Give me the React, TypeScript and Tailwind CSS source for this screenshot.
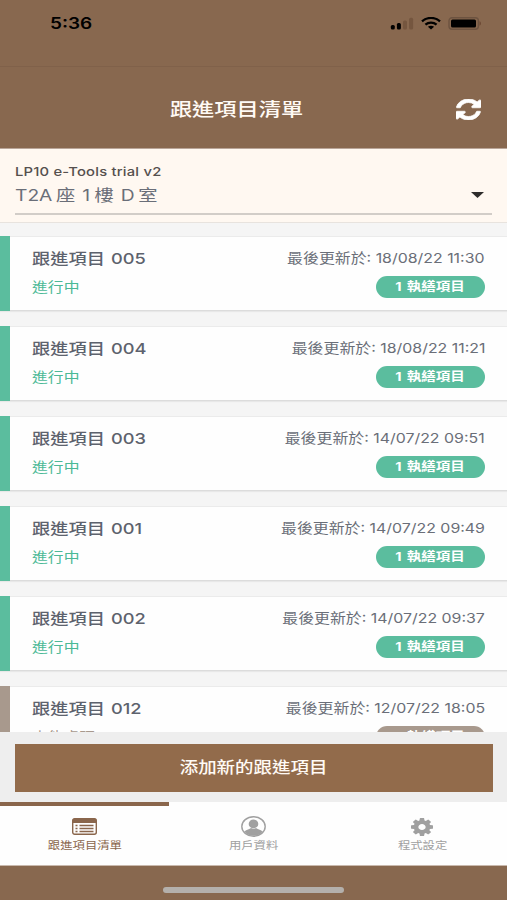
import type { ReactNode } from "react";

const FONT = "font-['Inter','Noto_Sans_CJK_TC',sans-serif]";

type Item = { id: string; updated: string; status: string; done?: boolean };

const ITEMS: Item[] = [
  { id: "005", updated: "18/08/22 11:30", status: "進行中" },
  { id: "004", updated: "18/08/22 11:21", status: "進行中" },
  { id: "003", updated: "14/07/22 09:51", status: "進行中" },
  { id: "001", updated: "14/07/22 09:49", status: "進行中" },
  { id: "002", updated: "14/07/22 09:37", status: "進行中" },
  { id: "012", updated: "12/07/22 18:05", status: "未能處理", done: true },
];

function Wide({ className = "", children }: { className?: string; children: ReactNode }) {
  return <span className={`block scale-x-120 whitespace-nowrap ${className}`}>{children}</span>;
}

function RefreshIcon() {
  return (
    <svg width="25" height="21" viewBox="0 0 1536 1536" preserveAspectRatio="none" fill="currentColor" stroke="currentColor" strokeWidth="50">
      <path d="M1511 928q0 5-1 7-64 268-268 434.500t-478 166.500q-146 0-282.500-55t-243.500-157l-129 129q-19 19-45 19t-45-19-19-45v-448q0-26 19-45t45-19h448q26 0 45 19t19 45-19 45l-137 137q71 66 161 102t187 36q134 0 250-65t186-179q11-17 53-117 8-23 30-23h192q13 0 22.500 9.500t9.500 22.500zm25-800v448q0 26-19 45t-45 19h-448q-26 0-45-19t-19-45 19-45l138-138q-148-137-349-137-134 0-250 65t-186 179q-11 17-53 117-8 23-30 23h-199q-13 0-22.500-9.500t-9.500-22.500v-7q65-268 270-434.500t480-166.500q146 0 284 55.500t245 156.500l130-129q19-19 45-19t45 19 19 45z" />
    </svg>
  );
}

function ListIcon() {
  return (
    <svg width="25" height="17" viewBox="0 0 25 17">
      <rect x="0.7" y="0.7" width="23.6" height="15.6" rx="2" fill="none" stroke="currentColor" strokeWidth="1.4" />
      <path d="M.5 2.500A2 2 0 0 1 2.500.5h20a2 2 0 0 1 2 2V5H.5Z" fill="currentColor" />
      <path d="M3.500 7.500h2M3.500 10.500h2M3.500 13.500h2M7.500 7.500h14M7.500 10.500h14M7.500 13.500h14" stroke="currentColor" strokeWidth="1.300" />
    </svg>
  );
}

function UserIcon() {
  return (
    <svg width="25" height="21" viewBox="0 0 25 21">
      <ellipse cx="12.5" cy="10.5" rx="11.7" ry="9.7" fill="none" stroke="currentColor" strokeWidth="1.4" />
      <ellipse cx="12.5" cy="7.9" rx="4.8" ry="4.3" fill="currentColor" />
      <path d="M3.500 15.700c1-1.800 4.500-2.200 6.500-3.700 1.500 1 3.500 1 5 0 2 1.500 5.500 1.900 6.500 3.700-4 5.400-14 5.400-18 0Z" fill="currentColor" />
    </svg>
  );
}

function GearIcon() {
  return (
    <svg className="-ml-px" width="22" height="18" viewBox="0 128 1536 1536" preserveAspectRatio="none" fill="currentColor">
      <path d="M1024 896q0-106-75-181t-181-75-181 75-75 181 75 181 181 75 181-75 75-181zm512-109v222q0 12-8 23t-20 13l-185 28q-19 54-39 91 35 50 107 138 10 12 10 25t-9 23q-27 37-99 108t-94 71q-12 0-26-9l-138-108q-44 23-91 38-16 136-29 186-7 28-36 28h-222q-14 0-24.500-8.500t-11.500-21.500l-28-184q-49-16-90-37l-141 107q-10 9-25 9-14 0-25-11-126-114-165-168-7-10-7-23 0-12 8-23 15-21 51-66.500t54-70.500q-27-50-41-99l-183-27q-13-2-21-12.500t-8-23.500v-222q0-12 8-23t19-13l186-28q14-46 39-92-40-57-107-138-10-12-10-24 0-10 9-23 26-36 98.500-107.500t94.500-71.500q13 0 26 10l138 107q44-23 91-38 16-136 29-186 7-28 36-28h222q14 0 24.500 8.500t11.500 21.500l28 184q49 16 90 37l142-107q9-9 24-9 13 0 25 10 129 119 165 170 7 8 7 22 0 12-8 23-15 21-51 66.500t-54 70.500q26 50 41 98l183 28q13 2 21 12.500t8 23.500z" />
    </svg>
  );
}

function StatusBar() {
  return (
    <div className="flex h-[67px] items-start justify-between border-b border-[#80614a] pl-[49.5px] pr-[25px] text-black">
      <Wide className="mt-[13px] origin-left text-[15.8px] leading-[22px] font-semibold">5:36</Wide>
      <div className="mt-[17px] flex items-center">
        <svg width="24" height="13" viewBox="0 0 24 13">
          <rect x="0.8" y="8" width="4" height="4.5" rx="1.5" />
          <rect x="6.9" y="6" width="4" height="6.5" rx="1.5" />
          <rect x="13" y="3.5" width="4" height="9" rx="1.5" fill="#75563f" />
          <rect x="19.1" y="0.8" width="4" height="11.7" rx="1.5" fill="#75563f" />
        </svg>
        <svg className="ml-[7px]" width="20" height="13" viewBox="0 0 20 13" fill="none" stroke="#000" strokeWidth="2.3">
          <path d="M1 4.400C6-.2 14-.2 19 4.400" />
          <path d="M4.400 7.700C7.600 5 12.400 5 15.600 7.700" />
          <path d="M10 12.500 6.900 9.800C8.700 8.500 11.300 8.500 13.100 9.800Z" fill="#000" stroke="none" />
        </svg>
        <svg className="ml-[7px]" width="34" height="13" viewBox="0 0 34 13">
          <rect x="1" y="0.8" width="29.4" height="11.4" rx="3" fill="none" stroke="#6d5340" strokeWidth="1.4" />
          <rect x="3" y="2.4" width="25" height="8.2" rx="1.5" />
          <path d="M31.500 4.300c2 .7 2 3.700 0 4.400Z" fill="#6d4a35" />
        </svg>
      </div>
    </div>
  );
}

function Card({ item }: { item: Item }) {
  return (
    <div className="flex h-[75px] shrink-0 border-y border-t-[#ebebeb] border-b-[#dcdcdc] bg-[#fefefe] shadow-[0_1px_1px_rgba(0,0,0,0.05)]">
      <div className={`-my-px w-[9.5px] ${item.done ? "bg-[#a8998d]" : "bg-[#5bbd9e]"}`} />
      <div className="flex flex-1 justify-between pl-[22px] pr-[22px]">
        <div className="flex flex-col items-start">
          <Wide className="mt-[11px] origin-left text-[15.2px] leading-[22px] font-medium [word-spacing:1px] text-[#5d626d]">
            跟進項目 {item.id}
          </Wide>
          <Wide className={`mt-[7px] origin-left text-[13.2px] leading-[20px] ${item.done ? "text-[#a8998d]" : "text-[#4bb996]"}`}>
            {item.status}
          </Wide>
        </div>
        <div className="flex flex-col items-end">
          <Wide className="mt-[9.5px] origin-right text-[13.25px] leading-[22px] text-[#6a6e78]">
            最後更新於: {item.updated}
          </Wide>
          <div className={`mt-[7px] flex h-[22px] w-[109.5px] items-center justify-center rounded-full text-white ${item.done ? "bg-[#a8998d]" : "bg-[#5bbd9e]"}`}>
            <Wide className="text-[12.1px] leading-[22px] font-bold [word-spacing:1.5px]">1 執繕項目</Wide>
          </div>
        </div>
      </div>
    </div>
  );
}

function Tab({ icon, label, active }: { icon: ReactNode; label: string; active?: boolean }) {
  return (
    <div className={`flex flex-1 flex-col items-center border-t-4 ${active ? "border-[#8a664c] text-[#8a664c]" : "border-transparent text-[#a0a0a0]"}`}>
      <div className="mt-[10px] flex h-[21px] items-center">{icon}</div>
      <Wide className="text-[10.3px] leading-[16px]">{label}</Wide>
    </div>
  );
}

export default function App() {
  return (
    <div className={`flex h-[900px] w-[507px] flex-col overflow-hidden bg-[#88684f] ${FONT}`}>
      <StatusBar />
      <header className="grid h-[81px] grid-cols-[1fr_auto_1fr] items-center pt-[3px] pr-[26px] pl-[5px]">
        <span />
        <Wide className="-ml-[12px] text-[18.5px] leading-[26px] font-medium text-[#fffaf5]">跟進項目清單</Wide>
        <span className="justify-self-end text-white">
          <RefreshIcon />
        </span>
      </header>

      <section className="h-[75px] border-t border-b border-t-[#b9a598] border-b-[#e8e3de] bg-[#fff8f1] px-[15px]">
        <Wide className="mt-[14px] w-fit origin-left text-[12.3px] leading-[18px] font-medium tracking-[0.18px] text-[#55504e]">
          LP10 e-Tools trial v2
        </Wide>
        <div className="flex h-[34px] items-center justify-between border-b-2 border-[#d2cdc8] pr-[8px]">
          <Wide className="origin-left pb-[4px] text-[16px] leading-[24px] text-[#6a6e78]">
            T2A<span className="ml-[3px] mr-[1.5px]">座</span> 1<span className="ml-[3.5px] mr-[1.5px]">樓</span> D<span className="ml-[3px]">室</span>
          </Wide>
          <svg className="-mt-[5px]" width="13" height="6" viewBox="0 0 13 6">
            <path d="M0 0h13L6.500 6Z" fill="#2e2c2b" />
          </svg>
        </div>
      </section>

      <main className="flex h-[509px] flex-col gap-[14.96px] overflow-hidden bg-[#f5f5f5] pt-[13.3px]">
        {ITEMS.map((item) => (
          <Card key={item.id} item={item} />
        ))}
      </main>

      <div className="h-[70px] bg-[#eeeeee] pt-[12px] pr-[14px] pl-[15px]">
        <button className="flex h-[48px] w-full items-center justify-center bg-[#926b4b] text-[15.4px] font-medium text-[#fffaf5]">
          <Wide>添加新的跟進項目</Wide>
        </button>
      </div>

      <nav className="flex h-[64px] border-b border-[#c9b9ad] bg-[#fefefe]">
        <Tab active label="跟進項目清單" icon={<ListIcon />} />
        <Tab label="用戶資料" icon={<UserIcon />} />
        <Tab label="程式設定" icon={<GearIcon />} />
      </nav>

      <div className="flex h-[34px] justify-center pt-[21px]">
        <div className="h-[5.5px] w-[181px] rounded-full bg-[#b4b0ac]" />
      </div>
    </div>
  );
}
